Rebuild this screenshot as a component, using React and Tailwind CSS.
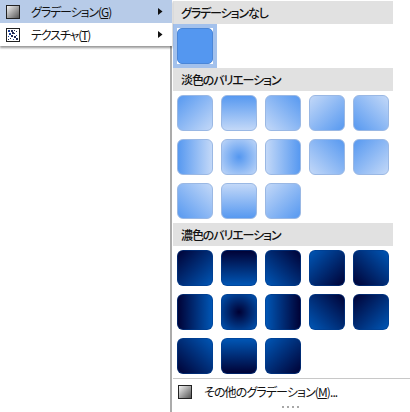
const font = { fontFamily: '"Noto Sans CJK JP", "Liberation Sans", sans-serif', fontFeatureSettings: '"palt"' };

const LIGHT_A = "#5497f0";
const LIGHT_B = "#c6daf8";
const DARK_A = "#000033";
const DARK_B = "#0058b8";

const grads = [
  (a, b) => `linear-gradient(135deg, ${a}, ${b})`,
  (a, b) => `linear-gradient(180deg, ${a}, ${b})`,
  (a, b) => `linear-gradient(225deg, ${a}, ${b})`,
  (a, b) => `linear-gradient(315deg, ${a}, ${b})`,
  (a, b) => `linear-gradient(45deg, ${a}, ${b})`,
  (a, b) => `linear-gradient(90deg, ${a}, ${b})`,
  (a, b) => `radial-gradient(circle closest-corner at center, ${a}, ${b})`,
  (a, b) => `linear-gradient(270deg, ${a}, ${b})`,
  (a, b) => `linear-gradient(225deg, ${a}, ${b})`,
  (a, b) => `linear-gradient(135deg, ${a}, ${b})`,
  (a, b) => `linear-gradient(45deg, ${a}, ${b})`,
  (a, b) => `linear-gradient(0deg, ${a}, ${b})`,
  (a, b) => `linear-gradient(315deg, ${a}, ${b})`,
];

function Swatch({ bg, border }) {
  return (
    <div
      className="w-9 h-9 rounded-[6px] border"
      style={{ background: bg, borderColor: border, backgroundOrigin: "border-box" }}
    />
  );
}

function Header({ children }) {
  return (
    <div className="h-[23px] w-[220px] bg-[#e1e1e1] pl-[8px] flex items-center text-[12px] font-medium tracking-[-1.1px] text-[#111]">
      {children}
    </div>
  );
}

function Grid({ a, b, border }) {
  return (
    <div className="grid grid-cols-[repeat(5,36px)] gap-x-2 gap-y-2 pl-1 pt-1 pb-1">
      {grads.map((g, i) => (
        <Swatch key={i} bg={g(a, b)} border={border} />
      ))}
    </div>
  );
}

function GradIcon() {
  return (
    <div
      className="w-[14px] h-[14px] border border-[#222] shrink-0"
      style={{ background: "linear-gradient(135deg,#f4f4f4,#555)" }}
    />
  );
}

function TexIcon() {
  const dots = [
    [2, 2, 2], [5, 2, 2], [8, 2, 1], [3, 5, 2], [6, 4, 2], [8, 5, 1], [2, 8, 1], [5, 7, 2],
    [10, 3, 1], [10, 7, 1], [8, 8, 2], [4, 10, 1], [7, 11, 1], [10, 10, 2], [2, 11, 1],
  ];
  return (
    <svg width="14" height="14" viewBox="0 0 14 14" className="shrink-0">
      <rect x="0.5" y="0.5" width="13" height="13" fill="#fff" stroke="#222" />
      {dots.map(([x, y, s], i) => (
        <rect key={i} x={x} y={y} width={s} height={s} fill={i % 3 === 0 ? "#1c3f94" : "#222a55"} />
      ))}
    </svg>
  );
}

function Arrow() {
  return (
    <svg width="5" height="7" viewBox="0 0 5 7" className="shrink-0">
      <path d="M0 0 L4.5 3.5 L0 7 Z" fill="#111" />
    </svg>
  );
}

function MenuRow({ active, icon, children }) {
  return (
    <div
      className={`h-[23px] flex items-center pl-[6px] pr-[9px] text-[12px] tracking-[-1.1px] text-[#111] ${active ? "bg-[#b7cbe8]" : "bg-white"}`}
    >
      <div className="w-[25px] shrink-0 flex items-center">{icon}</div>
      <div className="flex-1">{children}</div>
      <Arrow />
    </div>
  );
}

export default function App() {
  return (
    <div className="w-[410px] h-[412px] bg-white flex overflow-hidden" style={font}>
      <div className="w-[172px] shrink-0 border-r-2 border-[#ababab]">
        <div className="-mr-[2px] relative shadow-[0_2px_2px_rgba(0,0,0,0.4)]">
          <MenuRow active icon={<GradIcon />}>
            グラデーション(<span className="underline">G</span>)
          </MenuRow>
          <MenuRow icon={<TexIcon />}>
            テクスチャ(<span className="underline">T</span>)
          </MenuRow>
        </div>
      </div>
      <div className="flex-1 pl-px pt-px flex flex-col">
        <Header>グラデーションなし</Header>
        <div className="w-[44px] h-[44px] bg-[#a3c1ec] flex items-center justify-center">
          <div className="w-9 h-9 bg-white">
            <div className="w-9 h-9 rounded-[5px] bg-[#5497f0] border border-[#4a86d8]" />
          </div>
        </div>
        <Header>淡色のバリエーション</Header>
        <Grid a={LIGHT_A} b={LIGHT_B} border="#9ab8e4" />
        <Header>濃色のバリエーション</Header>
        <Grid a={DARK_A} b={DARK_B} border="rgba(0,60,140,0.55)" />
        <div className="border-t border-[#c8c8c8] h-[26px] flex items-center pl-[5px] text-[12px] tracking-[-0.9px] text-[#111]">
          <div className="w-[26px] shrink-0"><GradIcon /></div>
          <div>その他のグラデーション(<span className="underline">M</span>)...</div>
        </div>
        <div className="flex justify-center gap-[3px] w-[234px] mt-[2px]">
          {[0, 1, 2, 3].map((i) => (
            <div key={i} className="w-[2px] h-[2px] bg-[#a8a8a8]" />
          ))}
        </div>
      </div>
    </div>
  );
}
